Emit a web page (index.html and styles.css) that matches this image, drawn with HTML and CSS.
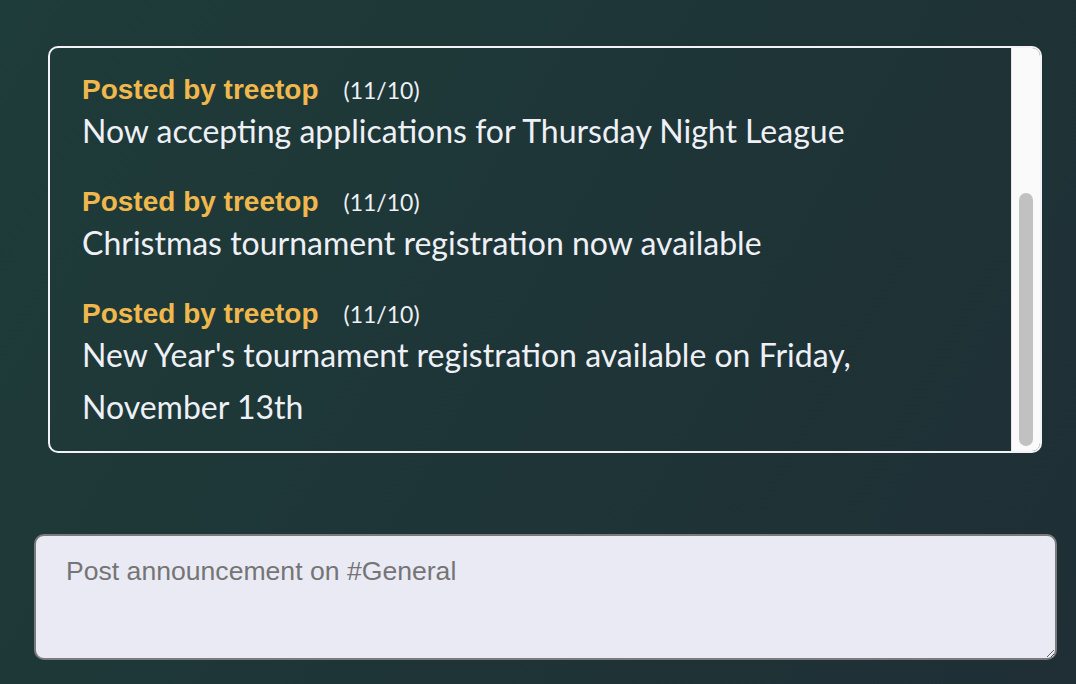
FILE: index.html
```html
<!DOCTYPE html>
<html>
<head>
<meta charset="utf-8">
<link rel="stylesheet" href="styles.css">
</head>
<body>
<main class="page">
  <section class="feed">
    <div class="feed-inner">
      <article class="post">
        <div class="post-head"><span class="author">Posted by treetop</span><span class="date">(11/10)</span></div>
        <p class="post-body">Now accepting applications for Thursday Night League</p>
      </article>
      <article class="post">
        <div class="post-head"><span class="author">Posted by treetop</span><span class="date">(11/10)</span></div>
        <p class="post-body">Christmas tournament registration now available</p>
      </article>
      <article class="post">
        <div class="post-head"><span class="author">Posted by treetop</span><span class="date">(11/10)</span></div>
        <p class="post-body">New Year's tournament registration available on Friday, November 13th</p>
      </article>
    </div>
    <div class="scrollbar"><div class="thumb"></div></div>
  </section>
  <textarea class="composer" placeholder="Post announcement on #General"></textarea>
</main>
</body>
</html>
```
FILE: styles.css
```css
html, body {
  margin: 0;
  height: 100%;
}
body {
  background: linear-gradient(120deg, #1e3c39 0%, #1e3537 50%, #1f2f35 100%);
  font-family: "Lato", "Open Sans", sans-serif;
  color: #eef0f6;
}
.page {
  padding: 46px 19px 0 34px;
  display: flex;
  flex-direction: column;
}
.feed {
  margin: 0 15px 0 14px;
  height: 403px;
  border: 2px solid #f2f2f7;
  border-radius: 10px;
  overflow: hidden;
  display: flex;
}
.feed-inner {
  flex: 1;
  display: flex;
  flex-direction: column;
  justify-content: flex-end;
  gap: 30px;
  padding: 26px 40px 18px 32px;
}
.scrollbar {
  width: 29px;
  flex: none;
  background: #fafafa;
  border-left: 1px solid #e6e6e6;
  padding: 145px 7px 5px 7px;
  box-sizing: border-box;
  display: flex;
}
.thumb {
  flex: 1;
  background: #c1c1c1;
  border-radius: 8px;
}
.post-head {
  display: flex;
  align-items: center;
  gap: 25px;
  height: 30px;
}
.author {
  font-family: "Liberation Sans", Arial, sans-serif;
  font-weight: bold;
  font-size: 28px;
  color: #f0b84c;
}
.date {
  font-size: 23px;
  color: #eef0f6;
}
.post-body {
  margin: 0;
  font-size: 32px;
  line-height: 52px;
  max-width: 860px;
}
.composer {
  margin-top: 81px;
  height: 126px;
  box-sizing: border-box;
  width: 1023px;
  border: 2px solid #7b7b7e;
  border-radius: 10px;
  background: #eaeaf5;
  padding: 19px 30px;
  font-family: "Liberation Sans", Arial, sans-serif;
  font-size: 26.6px;
  line-height: 32px;
  color: #333;
}
.composer::placeholder {
  color: #757575;
}
```
